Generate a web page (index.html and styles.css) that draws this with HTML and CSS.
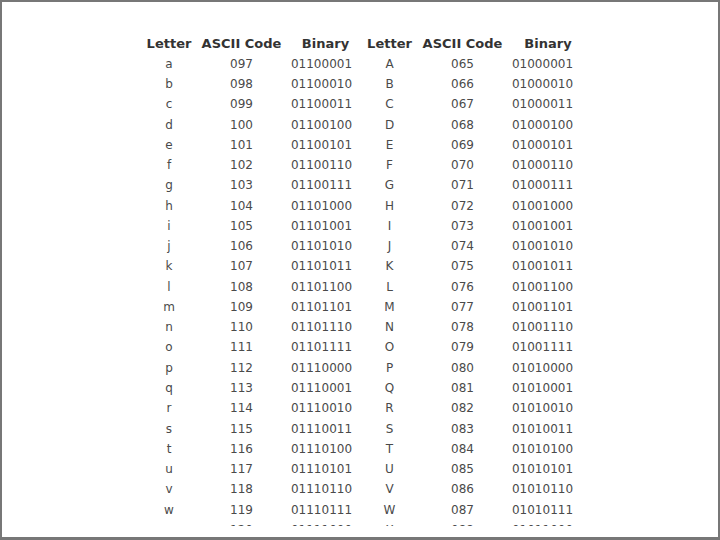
FILE: index.html
```html
<!DOCTYPE html>
<html>
<head>
<meta charset="utf-8">
<link rel="stylesheet" href="styles.css">
</head>
<body>
<div class="frame">
  <div class="clip">
    <div class="ascii">
      <div class="th">Letter</div><div class="th">ASCII Code</div><div class="th bin-h">Binary</div><div class="th">Letter</div><div class="th">ASCII Code</div><div class="th bin-h2">Binary</div>
      <div>a</div><div>097</div><div>01100001</div><div>A</div><div>065</div><div>01000001</div>
      <div>b</div><div>098</div><div>01100010</div><div>B</div><div>066</div><div>01000010</div>
      <div>c</div><div>099</div><div>01100011</div><div>C</div><div>067</div><div>01000011</div>
      <div>d</div><div>100</div><div>01100100</div><div>D</div><div>068</div><div>01000100</div>
      <div>e</div><div>101</div><div>01100101</div><div>E</div><div>069</div><div>01000101</div>
      <div>f</div><div>102</div><div>01100110</div><div>F</div><div>070</div><div>01000110</div>
      <div>g</div><div>103</div><div>01100111</div><div>G</div><div>071</div><div>01000111</div>
      <div>h</div><div>104</div><div>01101000</div><div>H</div><div>072</div><div>01001000</div>
      <div>i</div><div>105</div><div>01101001</div><div>I</div><div>073</div><div>01001001</div>
      <div>j</div><div>106</div><div>01101010</div><div>J</div><div>074</div><div>01001010</div>
      <div>k</div><div>107</div><div>01101011</div><div>K</div><div>075</div><div>01001011</div>
      <div>l</div><div>108</div><div>01101100</div><div>L</div><div>076</div><div>01001100</div>
      <div>m</div><div>109</div><div>01101101</div><div>M</div><div>077</div><div>01001101</div>
      <div>n</div><div>110</div><div>01101110</div><div>N</div><div>078</div><div>01001110</div>
      <div>o</div><div>111</div><div>01101111</div><div>O</div><div>079</div><div>01001111</div>
      <div>p</div><div>112</div><div>01110000</div><div>P</div><div>080</div><div>01010000</div>
      <div>q</div><div>113</div><div>01110001</div><div>Q</div><div>081</div><div>01010001</div>
      <div>r</div><div>114</div><div>01110010</div><div>R</div><div>082</div><div>01010010</div>
      <div>s</div><div>115</div><div>01110011</div><div>S</div><div>083</div><div>01010011</div>
      <div>t</div><div>116</div><div>01110100</div><div>T</div><div>084</div><div>01010100</div>
      <div>u</div><div>117</div><div>01110101</div><div>U</div><div>085</div><div>01010101</div>
      <div>v</div><div>118</div><div>01110110</div><div>V</div><div>086</div><div>01010110</div>
      <div>w</div><div>119</div><div>01110111</div><div>W</div><div>087</div><div>01010111</div>
      <div>x</div><div>120</div><div>01111000</div><div>X</div><div>088</div><div>01011000</div>
      <div>y</div><div>121</div><div>01111001</div><div>Y</div><div>089</div><div>01011001</div>
      <div>z</div><div>122</div><div>01111010</div><div>Z</div><div>090</div><div>01011010</div>
    </div>
  </div>
</div>
</body>
</html>
```

FILE: styles.css
```css
html, body {
  margin: 0;
  padding: 0;
  background: #ffffff;
}

.frame {
  width: 720px;
  height: 540px;
  box-sizing: border-box;
  border: 2px solid #777777;
  border-bottom-width: 3px;
  background: #ffffff;
}

.clip {
  height: 524px;
  overflow: hidden;
  padding-top: 31.5px;
  box-sizing: border-box;
}

.ascii {
  display: grid;
  grid-template-columns: 59px 86px 74px 62px 84px 76px;
  grid-auto-rows: 20.27px;
  justify-content: center;
  font-family: "DejaVu Sans", Verdana, sans-serif;
  font-size: 12px;
  line-height: 20.27px;
  color: #4a4a4a;
  text-align: center;
  white-space: nowrap;
}

.ascii .th {
  font-size: 13px;
  font-weight: bold;
  color: #333333;
}

.ascii .bin-h {
  padding-left: 8px;
}

.ascii .bin-h2 {
  padding-left: 11px;
}
```
